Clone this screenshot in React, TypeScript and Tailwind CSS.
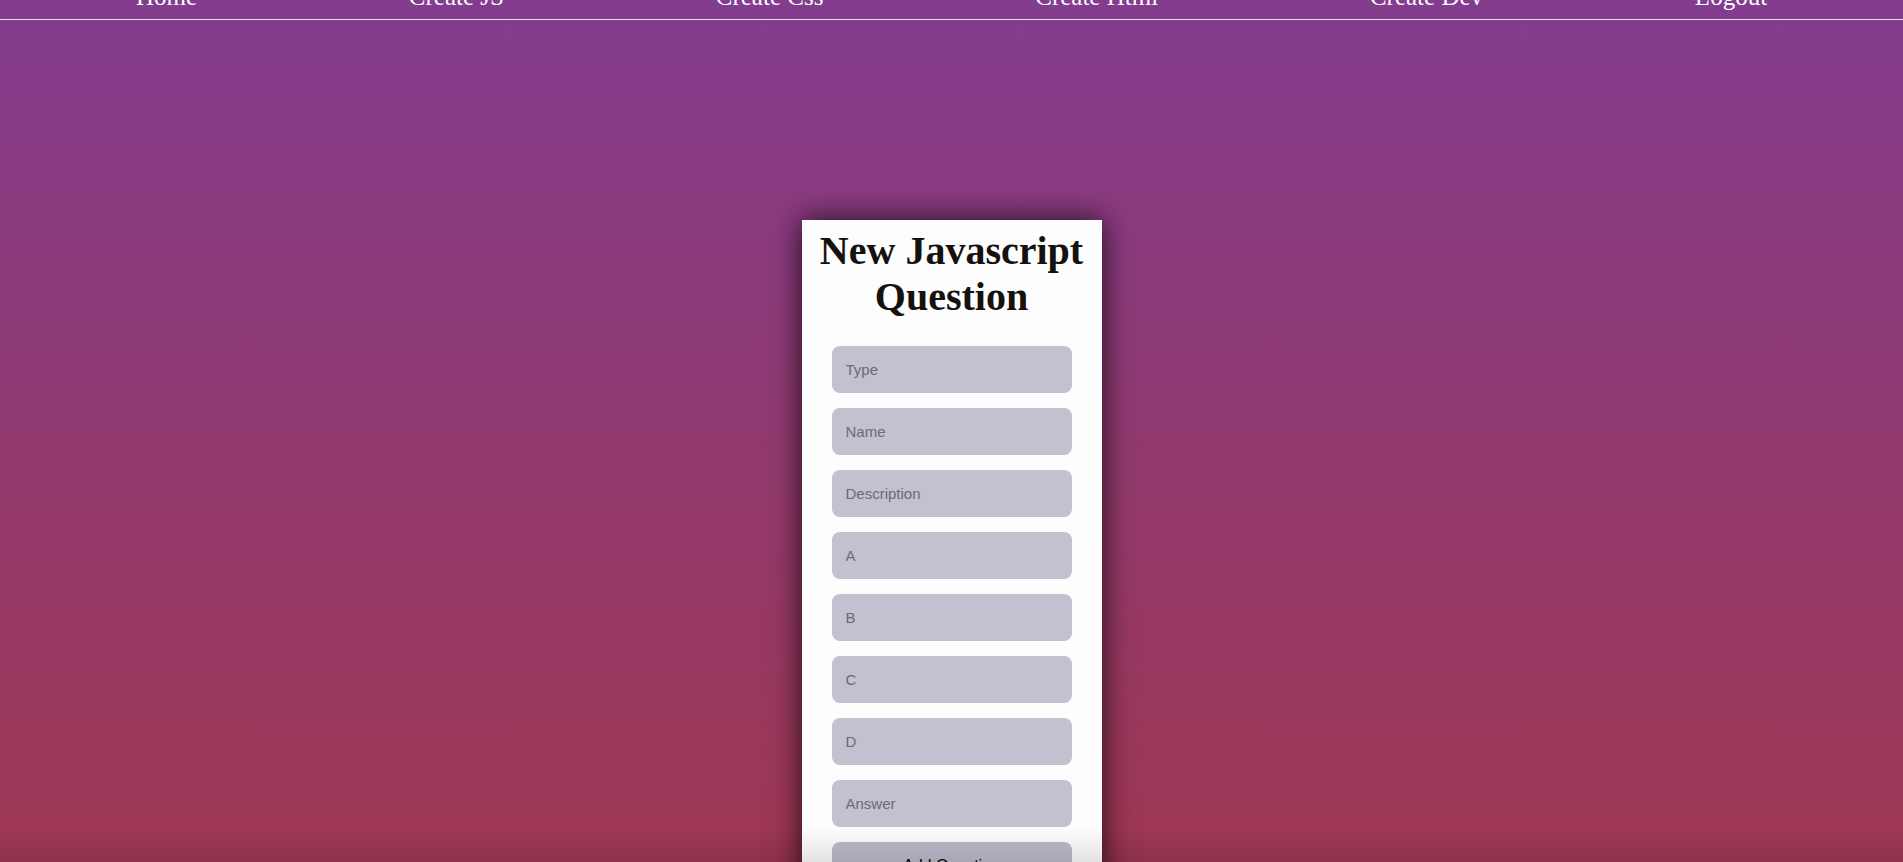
import React from 'react';

const links = ['Home', 'Create JS', 'Create Css', 'Create Html', 'Create Dev', 'Logout'];
const fields = ['Type', 'Name', 'Description', 'A', 'B', 'C', 'D', 'Answer'];

export default function App() {
    return (
        <div className="min-h-screen bg-[linear-gradient(to_bottom,#833c8e,#a1374f)] overflow-hidden">
            <nav className="-mt-[18px] h-[38px] border-b border-[#e4e4e4] flex items-start justify-around px-[30px]">
                {links.map((l) => (
                    <a key={l} href="#" className="text-[25px] leading-[29px] text-white font-['Liberation_Serif',serif]">
                        {l}
                    </a>
                ))}
            </nav>

            <div className="mx-auto mt-[200px] w-[300px] bg-[#fdfdfd] pt-[8px] pb-[30px] shadow-[0_0_28px_rgba(0,0,0,0.8)]">
                <h1 className="text-center text-[40px] leading-[46px] font-bold text-[#15110e] font-['Liberation_Serif',serif]">
                    New Javascript Question
                </h1>

                <form className="mt-[26px] px-[30px] flex flex-col gap-[15px]" onSubmit={(e) => e.preventDefault()}>
                    {fields.map((f) => (
                        <input
                            key={f}
                            placeholder={f}
                            className="h-[47px] w-full rounded-lg bg-[#c3c0cf] pl-[14px] text-[15px] font-['Liberation_Sans',sans-serif] text-black placeholder:text-[#6c6b70] outline-none"
                        />
                    ))}
                    <button className="h-[47px] w-full rounded-lg bg-[#bdbaca] text-[16px] text-black font-['Liberation_Sans',sans-serif]">
                        Add Question
                    </button>
                </form>
            </div>

            <div className="pointer-events-none fixed inset-x-0 bottom-0 h-[34px] bg-[linear-gradient(to_bottom,rgba(0,0,0,0),rgba(0,0,0,0.1))]" />
        </div>
    );
}
